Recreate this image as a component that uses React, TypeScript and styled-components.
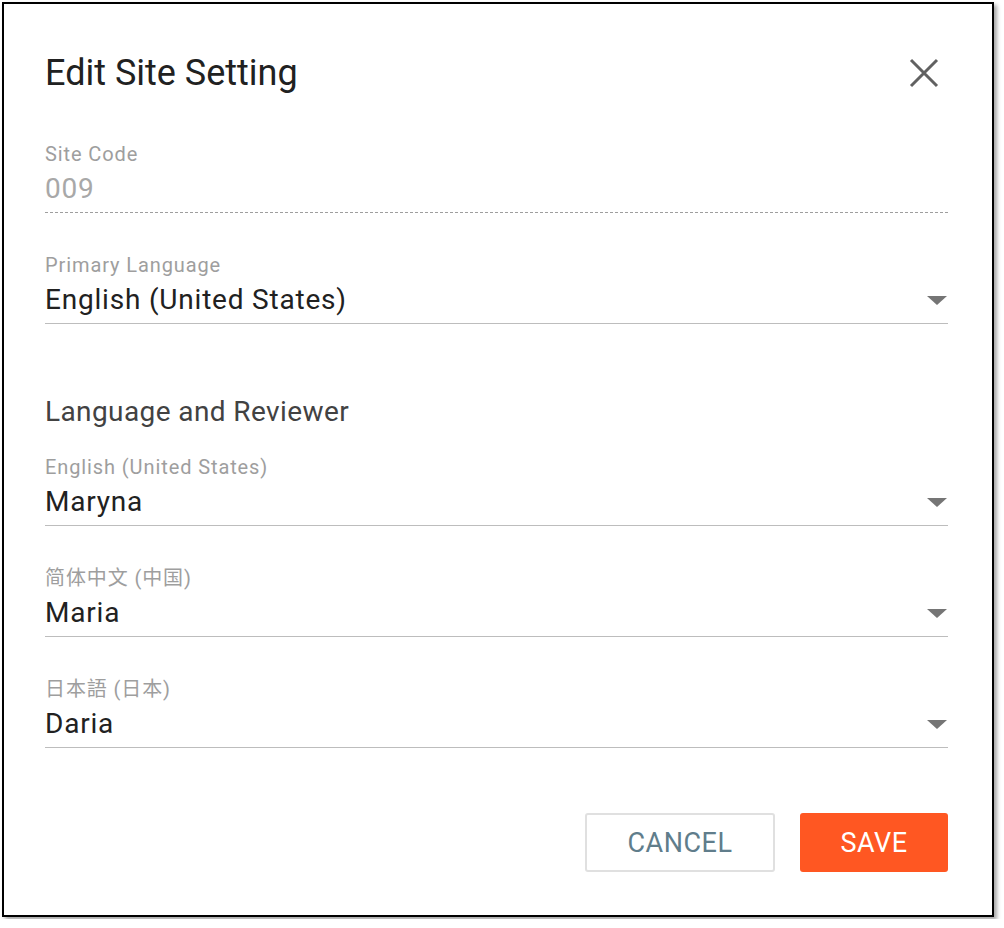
import React from "react";
import styled, { createGlobalStyle } from "styled-components";

const Global = createGlobalStyle`
  body { margin: 0; background: #fff; font-family: Roboto, "Noto Sans CJK SC", "Noto Sans CJK JP", sans-serif; }
`;

const Dialog = styled.div`
  margin: 2px;
  width: 992px;
  height: 915px;
  box-sizing: border-box;
  border: 2px solid #000;
  box-shadow: 3px 3px 4px rgba(0, 0, 0, 0.35);
  background: #fff;
  padding: 48px 44px 0 41px;
  display: flex;
  flex-direction: column;
`;

const Header = styled.div`
  display: flex;
  align-items: center;
  justify-content: space-between;
`;

const Title = styled.h1`
  margin: 0;
  font-size: 36px;
  line-height: 42px;
  font-weight: 400;
  color: #212121;
`;

const CloseButton = styled.button`
  border: none;
  background: none;
  padding: 0;
  margin-right: 9px;
  display: flex;
  cursor: pointer;
`;

const Field = styled.div<{ $gap: number }>`
  margin-top: ${(p) => p.$gap}px;
  display: flex;
  flex-direction: column;
`;

const Label = styled.div`
  font-size: 20px;
  line-height: 24px;
  color: #9e9e9e;
  letter-spacing: 0.9px;
`;

const ValueRow = styled.div<{ $disabled?: boolean }>`
  margin-top: 7px;
  padding-bottom: 7px;
  display: flex;
  align-items: center;
  justify-content: space-between;
  font-size: 28px;
  line-height: 32px;
  letter-spacing: 0.8px;
  color: ${(p) => (p.$disabled ? "#a8a8a8" : "#212121")};
  border-bottom: 1px ${(p) => (p.$disabled ? "dashed #9e9e9e" : "solid #bdbdbd")};
`;

const Arrow = styled.span`
  width: 0;
  height: 0;
  border-left: 10px solid transparent;
  border-right: 10px solid transparent;
  border-top: 9px solid #757575;
  margin-right: 1px;
`;

const Section = styled.h2`
  margin: 72px 0 0;
  font-size: 28px;
  line-height: 32px;
  font-weight: 400;
  color: #424242;
  letter-spacing: 0.4px;
`;

const Actions = styled.div`
  margin-top: 65px;
  display: flex;
  justify-content: flex-end;
  gap: 25px;
`;

const Button = styled.button<{ $primary?: boolean }>`
  height: 59px;
  padding: 0;
  width: ${(p) => (p.$primary ? 148 : 190)}px;
  border-radius: 3px;
  font-family: Roboto, sans-serif;
  font-size: 27px;
  letter-spacing: 0.5px;
  border: ${(p) => (p.$primary ? "none" : "2px solid #e0e0e0")};
  background: ${(p) => (p.$primary ? "#ff5722" : "#fff")};
  color: ${(p) => (p.$primary ? "#fff" : "#607d8b")};
  cursor: pointer;
`;

const Select = ({ label, value, gap }: { label: string; value: string; gap: number }) => (
  <Field $gap={gap}>
    <Label>{label}</Label>
    <ValueRow>
      {value}
      <Arrow />
    </ValueRow>
  </Field>
);

export default function App() {
  return (
    <>
      <Global />
      <Dialog>
        <Header>
          <Title>Edit Site Setting</Title>
          <CloseButton>
            <svg width="30" height="30" viewBox="0 0 30 30">
              <path d="M2 2L28 28M28 2L2 28" stroke="#616161" strokeWidth="3" />
            </svg>
          </CloseButton>
        </Header>
        <Field $gap={48}>
          <Label>Site Code</Label>
          <ValueRow $disabled>009</ValueRow>
        </Field>
        <Select label="Primary Language" value="English (United States)" gap={40} />
        <Section>Language and Reviewer</Section>
        <Select label="English (United States)" value="Maryna" gap={27} />
        <Select label="简体中文 (中国)" value="Maria" gap={40} />
        <Select label="日本語 (日本)" value="Daria" gap={40} />
        <Actions>
          <Button>CANCEL</Button>
          <Button $primary>SAVE</Button>
        </Actions>
      </Dialog>
    </>
  );
}
